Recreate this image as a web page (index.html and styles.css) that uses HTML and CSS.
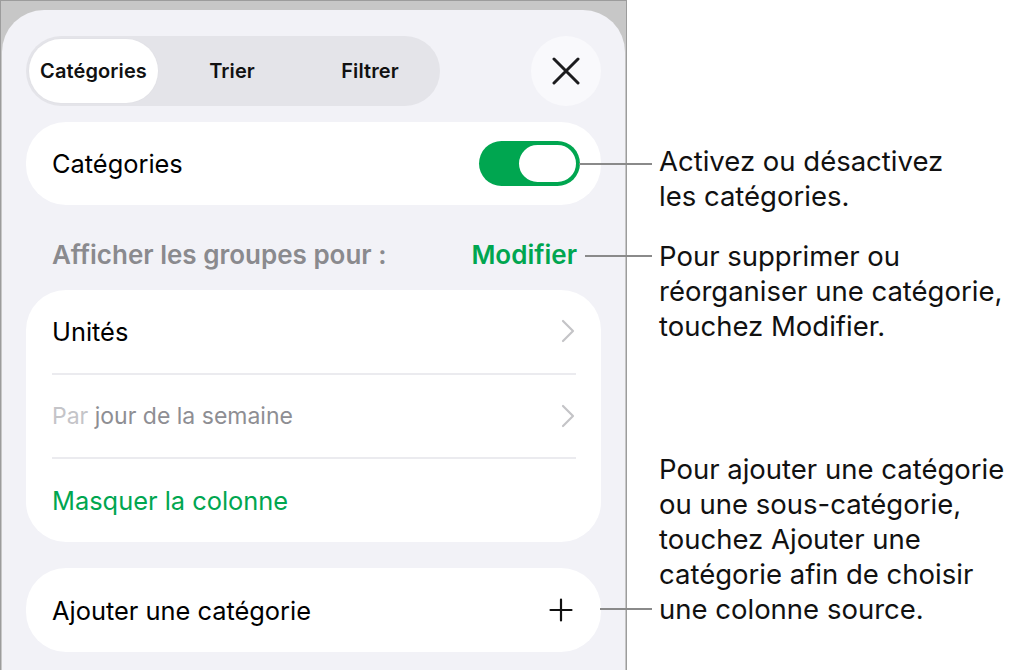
FILE: index.html
```html
<!DOCTYPE html>
<html lang="fr">
<head>
<meta charset="utf-8">
<title>Catégories</title>
<link rel="stylesheet" href="styles.css">
</head>
<body>
<div class="page">
  <div class="frame">
    <div class="sheet">
      <div class="header">
        <div class="segmented">
          <div class="tab tab-1 selected">Catégories</div>
          <div class="tab tab-2">Trier</div>
          <div class="tab tab-3">Filtrer</div>
        </div>
        <div class="close">
          <svg width="28" height="28" viewBox="0 0 28 28"><path d="M2 2 L26 26 M26 2 L2 26" stroke="#1c1c1e" stroke-width="3" stroke-linecap="round" fill="none"/></svg>
        </div>
      </div>

      <div class="card card-toggle">
        <span class="label">Catégories</span>
        <div class="toggle"><div class="knob"></div></div>
      </div>

      <div class="section-head">
        <span class="section-title">Afficher les groupes pour :</span>
        <span class="section-action">Modifier</span>
      </div>

      <div class="card card-list">
        <div class="row">
          <span class="label">Unités</span>
          <svg class="chev" width="14" height="24" viewBox="0 0 14 24"><path d="M2 2 L12 12 L2 22" stroke="#c4c4c7" stroke-width="2.2" stroke-linecap="round" stroke-linejoin="round" fill="none"/></svg>
        </div>
        <div class="sep"></div>
        <div class="row">
          <span class="label sub"><span class="faint">Par</span> jour de la semaine</span>
          <svg class="chev" width="14" height="24" viewBox="0 0 14 24"><path d="M2 2 L12 12 L2 22" stroke="#c4c4c7" stroke-width="2.2" stroke-linecap="round" stroke-linejoin="round" fill="none"/></svg>
        </div>
        <div class="sep"></div>
        <div class="row">
          <span class="label green">Masquer la colonne</span>
        </div>
      </div>

      <div class="card card-add">
        <span class="label">Ajouter une catégorie</span>
        <svg class="plus" width="24" height="24" viewBox="0 0 24 24"><path d="M12 1.5 V22.5 M1.5 12 H22.5" stroke="#111" stroke-width="2.2" stroke-linecap="round" fill="none"/></svg>
      </div>
    </div>
  </div>

  <div class="notes">
    <p class="note note-1">Activez ou désactivez<br>les catégories.</p>
    <p class="note note-2">Pour supprimer ou<br>réorganiser une catégorie,<br>touchez Modifier.</p>
    <p class="note note-3">Pour ajouter une catégorie<br>ou une sous-catégorie,<br>touchez Ajouter une<br>catégorie afin de choisir<br>une colonne source.</p>
  </div>

  <div class="leader leader-1"></div>
  <div class="leader leader-2"></div>
  <div class="leader leader-3"></div>
</div>
</body>
</html>
```

FILE: styles.css
```css
html, body {
  margin: 0;
  padding: 0;
  background: #ffffff;
}
body {
  font-family: Inter, "Liberation Sans", sans-serif;
  color: #000;
}
.page {
  position: relative;
  display: flex;
  width: 1021px;
  height: 670px;
}
.frame {
  width: 625px;
  height: 666px;
  border: 1px solid #9c9c9c;
  background: #c7c7c7;
  padding-top: 9px;
  box-sizing: content-box;
  display: flex;
  flex-direction: column;
}
.sheet {
  flex: 1;
  margin: 0 1px;
  background: #f2f2f7;
  border-radius: 42px 42px 0 0;
  padding: 26px 24px 0 24px;
  display: flex;
  flex-direction: column;
}
.header {
  display: flex;
  justify-content: space-between;
  align-items: center;
  height: 70px;
}
.segmented {
  display: flex;
  align-items: center;
  width: 408px;
  height: 70px;
  padding: 0 3px;
  border-radius: 35px;
  background: #e4e4e9;
}
.tab {
  height: 64px;
  display: flex;
  align-items: center;
  justify-content: center;
  font-size: 20px;
  font-weight: 600;
  letter-spacing: 0.1px;
  color: #111;
}
.tab-1 { width: 129px; }
.tab-2 { width: 148px; }
.tab-3 { width: 128px; }
.selected {
  background: #ffffff;
  border-radius: 32px;
  box-shadow: 0 0 0 1px #e2e2e7;
}
.close {
  width: 70px;
  height: 70px;
  border-radius: 50%;
  background: #f9f9fc;
  display: flex;
  align-items: center;
  justify-content: center;
}
.card {
  background: #ffffff;
  border-radius: 40px;
  padding: 0 25px 0 26px;
}
.label {
  font-size: 25.4px;
}
.card-toggle {
  margin-top: 16px;
  height: 83px;
  display: flex;
  align-items: center;
  justify-content: space-between;
  padding-right: 21px;
}
.toggle {
  width: 101px;
  height: 45px;
  border-radius: 23px;
  background: #00a650;
  display: flex;
  align-items: center;
  justify-content: flex-end;
  padding-right: 2px;
  box-sizing: border-box;
}
.knob {
  width: 61px;
  height: 41px;
  border-radius: 21px;
  background: #ffffff;
  box-sizing: border-box;
  border: 2px solid #00a650;
}
.section-head {
  height: 85px;
  box-sizing: border-box;
  padding: 13px 24px 0 26px;
  display: flex;
  align-items: center;
  justify-content: space-between;
  font-size: 26px;
  font-weight: 600;
}
.section-title { color: #8a8a8e; }
.section-action { color: #00a650; }
.card-list {
  height: 252px;
  display: flex;
  flex-direction: column;
}
.row {
  height: 83px;
  display: flex;
  align-items: center;
  justify-content: space-between;
}
.chev { margin-right: 1px; }
.sep {
  height: 2px;
  background: #ebebef;
}
.sub {
  font-size: 23px;
  color: #8e8e93;
}
.faint { color: #c4c4c8; }
.green { color: #00a650; }
.card-add {
  margin-top: 26px;
  height: 84px;
  display: flex;
  align-items: center;
  justify-content: space-between;
}
.plus { margin-right: 3px; }

.notes {
  padding-left: 32px;
  padding-top: 144px;
  font-size: 27.5px;
  line-height: 35px;
  color: #111;
}
.note {
  margin: 0;
  white-space: nowrap;
}
.note-2 { margin-top: 25px; }
.note-3 { margin-top: 108px; }

.leader {
  position: absolute;
  height: 2px;
  background: #8a8a8a;
}
.leader-1 { left: 579px; width: 73px; top: 163px; }
.leader-2 { left: 585px; width: 67px; top: 255px; }
.leader-3 { left: 600px; width: 52px; top: 608px; }
```
